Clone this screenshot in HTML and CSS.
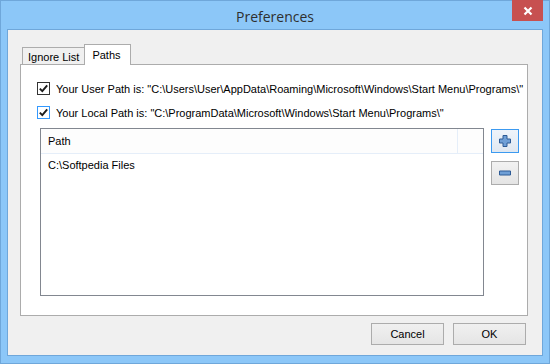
FILE: index.html
```html
<!DOCTYPE html>
<html lang="en">
<head>
    <meta charset="UTF-8">
    <title>Preferences</title>
    <link rel="stylesheet" href="styles.css">
</head>
<body>
    <div class="window">
        <div class="titlebar">
            <span class="title">Preferences</span>
            <button class="close" type="button">
                <svg width="10" height="10" viewBox="0 0 10 10"><path d="M1.5 1.5 L8.5 8.5 M8.5 1.5 L1.5 8.5" stroke="#fff" stroke-width="2.2"/></svg>
            </button>
        </div>

        <div class="client">
            <div class="tabs">
                <div class="tab">Ignore List</div>
                <div class="tab active">Paths</div>
            </div>

            <div class="panel">
                <label class="check-row">
                    <span class="box"><svg width="11" height="11" viewBox="0 0 11 11"><path d="M1.8 5.6 L4.3 8.2 L9.2 2.4" fill="none" stroke="#1c1c1c" stroke-width="1.9"/></svg></span>
                    <span class="label-text">Your User Path is: "C:\Users\User\AppData\Roaming\Microsoft\Windows\Start Menu\Programs\"</span>
                </label>
                <label class="check-row">
                    <span class="box hover"><svg width="11" height="11" viewBox="0 0 11 11"><path d="M1.8 5.6 L4.3 8.2 L9.2 2.4" fill="none" stroke="#1c1c1c" stroke-width="1.9"/></svg></span>
                    <span class="label-text">Your Local Path is: "C:\ProgramData\Microsoft\Windows\Start Menu\Programs\"</span>
                </label>

                <div class="list-row">
                    <div class="listbox">
                        <div class="list-head">
                            <span class="col">Path</span>
                            <span class="col-rest"></span>
                        </div>
                        <div class="list-item">C:\Softpedia Files</div>
                    </div>
                    <div class="side-buttons">
                        <button class="icon-btn focused" type="button">
                            <svg width="14" height="14" viewBox="0 0 14 14"><path d="M5 1.5 H9 V5 H12.5 V9 H9 V12.5 H5 V9 H1.5 V5 H5 Z" fill="#6f9fd6" stroke="#2d5b96" stroke-width="1"/></svg>
                        </button>
                        <button class="icon-btn" type="button">
                            <svg width="14" height="14" viewBox="0 0 14 14"><path d="M1.5 5 H12.5 V9 H1.5 Z" fill="#6f9fd6" stroke="#2d5b96" stroke-width="1"/></svg>
                        </button>
                    </div>
                </div>
            </div>

            <div class="footer">
                <button class="btn" type="button">Cancel</button>
                <button class="btn" type="button">OK</button>
            </div>
        </div>
    </div>
</body>
</html>
```

FILE: styles.css
```css
body {
    margin: 0;
    font-family: "Liberation Sans", Arial, sans-serif;
    font-size: 11px;
    color: #000;
}

.window {
    width: 550px;
    height: 364px;
    box-sizing: border-box;
    background: #8cc7f8;
    border: 1px solid #6fa7da;
    display: flex;
    flex-direction: column;
    position: relative;
}

.titlebar {
    height: 28px;
    display: flex;
    align-items: center;
    justify-content: center;
}

.title {
    font-family: "Open Sans", "Noto Sans", sans-serif;
    font-size: 14px;
    color: #2f2f2f;
    margin-top: 2px;
}

.close {
    position: absolute;
    top: -1px;
    right: 6px;
    width: 31px;
    height: 21px;
    border: none;
    padding: 0;
    background: #c75050;
    display: flex;
    align-items: center;
    justify-content: center;
}

.client {
    flex: 1;
    margin: 0 6px 7px 6px;
    border: 1px solid #6fa7da;
    background: #f0f0f0;
    padding: 14px 14px 10px 12px;
    display: flex;
    flex-direction: column;
}

/* onglets */
.tabs {
    display: flex;
    align-items: flex-end;
    height: 20px;
    padding-left: 2px;
}

.tab {
    height: 17px;
    box-sizing: border-box;
    padding: 2px 5px 0 5px;
    border: 1px solid #acacac;
    border-bottom: none;
    background: #f0f0f0;
    line-height: 14px;
}

.tab.active {
    height: 21px;
    margin-bottom: -1px;
    margin-left: -1px;
    padding: 3px 9px 0 7px;
    background: #fff;
    position: relative;
    z-index: 1;
}

.panel {
    height: 252px;
    box-sizing: border-box;
    border: 1px solid #acacac;
    background: #fff;
    padding: 15px 0 0 16px;
    overflow: hidden;
}

.check-row {
    display: flex;
    align-items: center;
    height: 17px;
    margin-bottom: 7px;
    color: #000;
}

.label-text {
    white-space: nowrap;
    overflow: hidden;
    padding-right: 2px;
}

.box {
    width: 13px;
    height: 13px;
    box-sizing: border-box;
    border: 1px solid #333;
    background: #fff;
    margin-right: 6px;
    flex-shrink: 0;
    display: flex;
    align-items: center;
    justify-content: center;
}

.box.hover {
    border-color: #3399ff;
}

.list-row {
    display: flex;
    gap: 7px;
    margin-top: 2px;
    padding-left: 3px;
}

.listbox {
    width: 444px;
    height: 168px;
    box-sizing: border-box;
    border: 1px solid #828790;
    background: #fff;
}

.list-head {
    display: flex;
    height: 25px;
    box-sizing: border-box;
    border-bottom: 1px solid #e5eef9;
    background: #fdfdfd;
}

.col {
    width: 417px;
    box-sizing: border-box;
    padding-left: 7px;
    border-right: 1px solid #e5eef9;
    line-height: 24px;
}

.col-rest {
    flex: 1;
}

.list-item {
    padding: 2px 0 0 7px;
    line-height: 18px;
}

.side-buttons {
    display: flex;
    flex-direction: column;
    gap: 8px;
    padding-top: 1px;
}

.icon-btn {
    width: 28px;
    height: 24px;
    box-sizing: border-box;
    border: 1px solid #acacac;
    background: linear-gradient(#f2f2f2, #e4e4e4);
    padding: 0;
    display: flex;
    align-items: center;
    justify-content: center;
}

.icon-btn.focused {
    border-color: #3c9af0;
    background: linear-gradient(#eef4fb, #e0e8f1);
}

.footer {
    display: flex;
    justify-content: flex-end;
    gap: 9px;
    margin-top: 7px;
    padding-right: 2px;
}

.btn {
    width: 73px;
    height: 22px;
    box-sizing: border-box;
    border: 1px solid #acacac;
    background: linear-gradient(#f0f0f0, #e5e5e5);
    font-family: "Liberation Sans", Arial, sans-serif;
    font-size: 11px;
    color: #000;
    padding: 0;
}
```
